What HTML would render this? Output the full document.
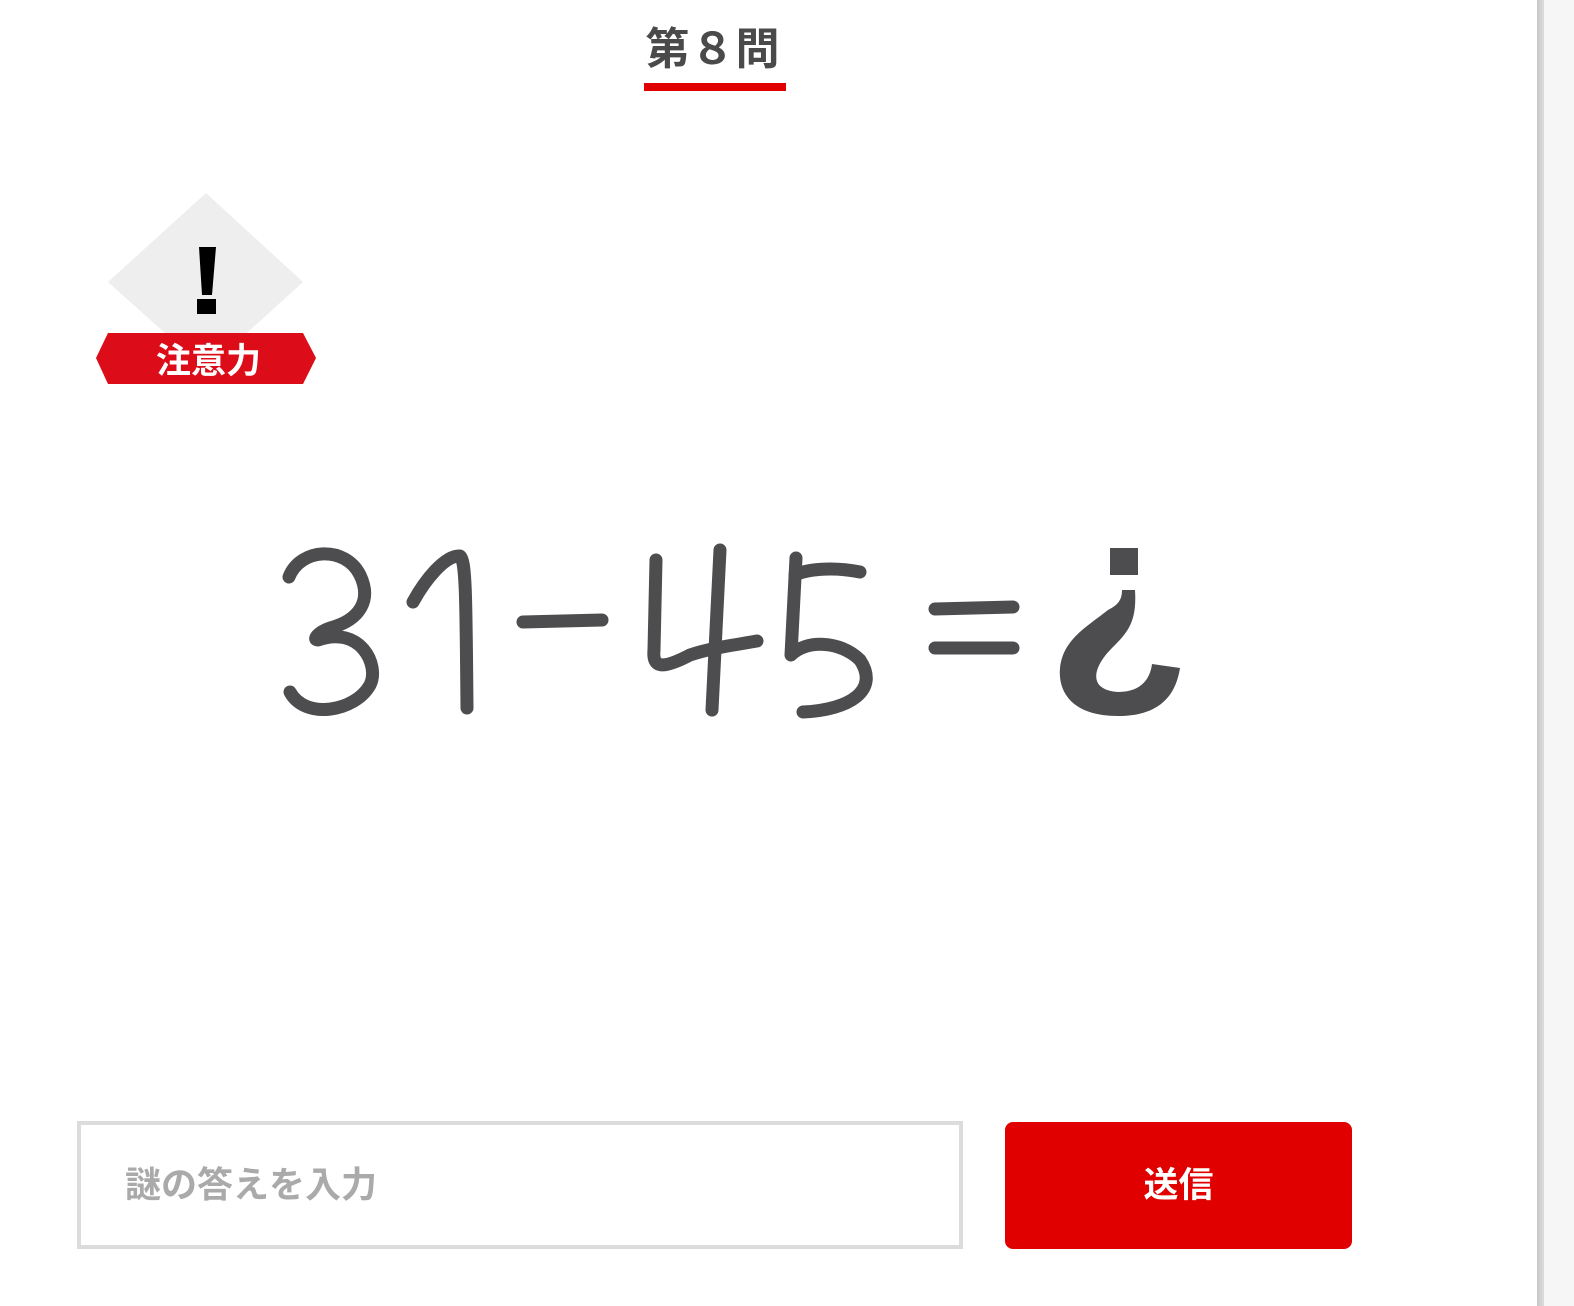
<!DOCTYPE html>
<html><head><meta charset="utf-8">
<style>
html,body{margin:0;padding:0;background:#fff;width:1574px;height:1306px;overflow:hidden;position:relative;font-family:"Liberation Sans","Noto Sans CJK JP",sans-serif;}
.title{position:absolute;left:613px;width:200px;top:24px;text-align:center;font-size:44px;font-weight:bold;color:#4a4a4a;letter-spacing:1px;line-height:52px;}
.ul{position:absolute;left:644px;top:83px;width:142px;height:8px;background:#e00000;}
.side{position:absolute;left:1537px;top:0;width:37px;height:1306px;background:#f6f6f6;}
.side:before{content:"";position:absolute;left:0;top:0;width:7px;height:100%;background:linear-gradient(90deg,#c8c8c8,#dcdcdc);}
.inp{position:absolute;left:77px;top:1121px;width:878px;height:120px;border:4px solid #dcdcdc;background:#fff;}
.inp span{position:absolute;left:44px;top:38px;font-size:36px;color:#aaa;font-weight:bold;line-height:44px;}
.btn{position:absolute;left:1005px;top:1122px;width:347px;height:127px;background:#e00000;border-radius:8px;color:#fff;font-size:35px;font-weight:bold;text-align:center;line-height:127px;}
</style></head><body>
<div class="title">第８問</div>
<div class="ul"></div>
<svg style="position:absolute;left:0;top:0" width="1574" height="1306">
<polygon points="206,193 303,282 206,370 108,282" fill="#eeeeee"/>
<polygon points="199,247 216,247 212,295 202,295" fill="#000"/>
<rect x="197" y="299" width="19" height="15" fill="#000"/>
<polygon points="108,333 303,333 316,358 303,384 108,384 96,358" fill="#dc0c18"/>
<text x="156" y="373" font-size="35" font-weight="bold" fill="#fff" font-family="Liberation Sans,Noto Sans CJK JP,sans-serif">注意力</text>
<g fill="none" stroke="#4d4d4f" stroke-width="13" stroke-linecap="round" stroke-linejoin="round">
<path d="M289,577 C300,548 345,545 360,575 C372,600 360,620 330,628 C318,632 312,640 318,640 C360,625 380,665 370,685 C355,712 305,720 290,692"/>
<path d="M413,602 C425,580 445,555 460,556 C466,560 466,600 467,708"/>
<path d="M523,622 L602,620"/>
<path d="M656,560 L654,650 C652,670 665,668 690,655 C710,648 735,645 757,641"/>
<path d="M720,550 L712,710"/>
<path d="M860,572 C830,566 805,570 795,575"/>
<path d="M796,558 L791,655 C805,640 840,640 860,660 C880,690 850,710 803,712"/>
<path d="M935,609 L1013,607"/>
<path d="M935,648 L1013,648"/>
</g>
<rect x="1110" y="548" width="28" height="27" fill="#4d4d4f"/>
<path d="M1122,590 L1135,590 C1137,622 1128,632 1112,648 C1092,668 1088,690 1118,692 C1140,692 1150,680 1152,664 L1180,668 C1175,700 1155,716 1118,716 C1070,716 1058,690 1060,668 C1063,640 1085,628 1108,610 C1118,605 1122,600 1122,590 Z" fill="#4d4d4f"/>
</svg>
<div class="inp"><span>謎の答えを入力</span></div>
<div class="btn">送信</div>
<div class="side"></div>
</body></html>
